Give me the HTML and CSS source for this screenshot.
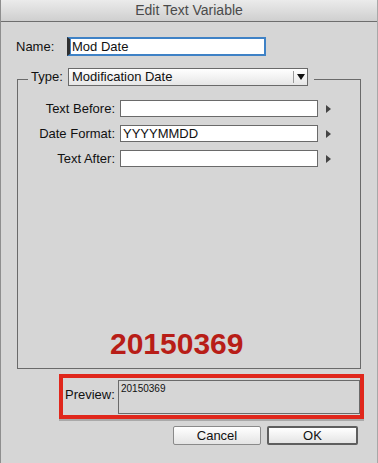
FILE: index.html
```html
<!DOCTYPE html>
<html lang="en">
<head>
    <meta charset="UTF-8">
    <title>Edit Text Variable</title>
    <link rel="stylesheet" href="styles.css">
</head>
<body>
    <div class="dialog">
        <div class="titlebar">Edit Text Variable</div>

        <div class="content">
            <div class="name_row">
                <label class="name_label">Name:</label>
                <div class="name_input">Mod Date</div>
            </div>

            <fieldset class="type_box">
                <legend class="type_legend">
                    <span class="type_label">Type:</span>
                    <span class="select">
                        <span class="select_text">Modification Date</span>
                        <span class="select_arrow"></span>
                    </span>
                </legend>

                <div class="rows">
                    <label class="row_label">Text Before:</label>
                    <div class="text_field"></div>
                    <span class="insert_arrow"></span>

                    <label class="row_label">Date Format:</label>
                    <div class="text_field">YYYYMMDD</div>
                    <span class="insert_arrow"></span>

                    <label class="row_label">Text After:</label>
                    <div class="text_field"></div>
                    <span class="insert_arrow"></span>
                </div>

                <div class="big_value">20150369</div>
            </fieldset>

            <div class="preview_box">
                <label class="preview_label">Preview:</label>
                <div class="preview_field">20150369</div>
            </div>

            <div class="buttons">
                <button class="btn">Cancel</button>
                <button class="btn btn_default">OK</button>
            </div>
        </div>
    </div>
</body>
</html>
```

FILE: styles.css
```css
body {
    margin: 0;
    background: #d6d6d6;
    font-family: "Liberation Sans", Arial, sans-serif;
    font-size: 13px;
    color: #111;
}

.dialog {
    width: 378px;
    height: 463px;
    box-sizing: border-box;
    border-left: 1px solid #8e8e8e;
    border-right: 1px solid #a8a8a8;
    background: #d6d6d6;
}

.titlebar {
    height: 21px;
    line-height: 21px;
    text-align: center;
    color: #4a4a4a;
    font-size: 14px;
    background: linear-gradient(#ebebeb, #cfcfcf);
    border-bottom: 1px solid #6e6e6e;
}

.content {
    padding: 15px 0 0 0;
}

.name_row {
    display: flex;
    align-items: center;
    padding-left: 15px;
}

.name_label {
    width: 51px;
}

.name_input {
    width: 199px;
    height: 19px;
    box-sizing: border-box;
    border: 2px solid #3f82c6;
    background: #fff;
    padding-left: 2px;
    line-height: 15px;
    border-left-width: 3px;
    border-left-color: #2f2f2f;
    box-shadow: inset 1px 0 0 #3f82c6;
}

.type_box {
    margin: 12px 0 0 16px;
    width: 344px;
    height: 301px;
    box-sizing: border-box;
    border: 1px solid #6a6a6a;
    padding: 0 0 0 10px;
    display: flex;
    flex-direction: column;
}

.type_legend {
    display: flex;
    align-items: flex-start;
    padding: 0 6px 4px 3px;
}

.type_label {
    width: 37px;
    line-height: 18px;
}

.select {
    display: flex;
    align-items: center;
    width: 240px;
    height: 18px;
    box-sizing: border-box;
    border: 1px solid #6a6a6a;
    background: linear-gradient(#ffffff, #e6e6e6);
}

.select_text {
    flex: 1;
    padding-left: 3px;
    line-height: 16px;
}

.select_arrow {
    width: 13px;
    height: 12px;
    border-left: 1px solid #9a9a9a;
    position: relative;
}

.select_arrow::after {
    content: "";
    position: absolute;
    left: 3px;
    top: 3px;
    border-left: 4px solid transparent;
    border-right: 4px solid transparent;
    border-top: 6px solid #111;
}

.rows {
    display: grid;
    grid-template-columns: 87px 198px 6px;
    column-gap: 5px;
    row-gap: 8px;
    align-items: center;
    margin-top: 10px;
}

.rows .insert_arrow {
    margin-left: 3px;
}

.row_label {
    text-align: right;
}

.text_field {
    height: 17px;
    box-sizing: border-box;
    border: 1px solid #6a6a6a;
    background: #fff;
    padding-left: 2px;
    line-height: 15px;
}

.insert_arrow {
    width: 0;
    height: 0;
    border-top: 4.5px solid transparent;
    border-bottom: 4.5px solid transparent;
    border-left: 5px solid #444;
}

.big_value {
    margin-top: auto;
    margin-bottom: 9px;
    padding-left: 82px;
    font-size: 30px;
    font-weight: bold;
    color: #b81d17;
    line-height: 30px;
}

.preview_box {
    margin: 5px 0 0 58px;
    width: 305px;
    height: 45px;
    box-sizing: border-box;
    border: 4px solid #e0271c;
    box-shadow: 0 2px 0 #a9a9a9;
    display: flex;
    align-items: stretch;
    padding: 2px 0 1px 2px;
}

.preview_label {
    width: 53px;
    padding-top: 7px;
}

.preview_field {
    flex: 1;
    border: 1px solid #6a6a6a;
    padding: 2px 0 0 2px;
    font-size: 10px;
    line-height: 12px;
}

.buttons {
    display: flex;
    gap: 6px;
    padding-left: 172px;
    margin-top: 7px;
}

.btn {
    font-family: "Liberation Sans", Arial, sans-serif;
    font-size: 13px;
    height: 19px;
    padding: 0;
    border: 1px solid #8a8a8a;
    border-radius: 2px;
    background: linear-gradient(#ffffff, #e4e4e4);
    width: 88px;
    color: #111;
    line-height: 16px;
}

.btn_default {
    width: 91px;
    border: 2px solid #5e5e5e;
}
```
